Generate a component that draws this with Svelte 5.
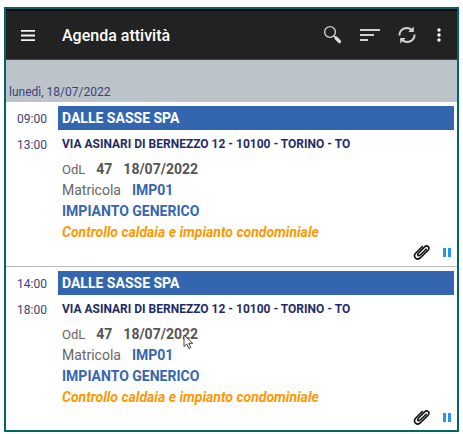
<script lang="ts">
  type Activity = {
    start: string;
    end: string;
    customer: string;
    address: string;
    order: string;
    date: string;
    serial: string;
    plant: string;
    note: string;
  };

  const day = 'lunedì, 18/07/2022';

  const base = {
    customer: 'DALLE SASSE SPA',
    address: 'VIA ASINARI DI BERNEZZO 12 - 10100 - TORINO - TO',
    order: '47',
    date: '18/07/2022',
    serial: 'IMP01',
    plant: 'IMPIANTO GENERICO',
    note: 'Controllo caldaia e impianto condominiale',
  };

  const activities: Activity[] = [
    { start: '09:00', end: '13:00', ...base },
    { start: '14:00', end: '18:00', ...base },
  ];
</script>

<div class="page">
  <main class="app">
    <header class="toolbar">
      <button class="menu" aria-label="Menu">
        <svg width="14" height="11" viewBox="0 0 14 11" fill="#f4f4f4">
          <path d="M0 0h14v1.800H0zM0 4.600h14v1.800H0zM0 9.200h14v1.800H0z" />
        </svg>
      </button>
      <h1>Agenda attività</h1>
      <button aria-label="Cerca">
        <svg width="20" height="20" viewBox="0 0 20 20" fill="none">
          <circle cx="7" cy="7" r="5.4" stroke="#d2d2d2" stroke-width="1.4" />
          <path d="M10.800 10.800l2 2" stroke="#d2d2d2" stroke-width="1.400" />
          <path d="M13 13l3.500 3.500" stroke="#e0e0e0" stroke-width="3.200" stroke-linecap="round" />
        </svg>
      </button>
      <button aria-label="Ordina">
        <svg width="20" height="20" viewBox="0 0 20 20" fill="#d0d0d0">
          <path d="M0 4h20v2H0zM0 9h14v2H0zM0 14h8v2H0z" />
        </svg>
      </button>
      <button aria-label="Aggiorna">
        <svg width="20" height="20" viewBox="0 0 20 20" fill="none" stroke="#d2d2d2" stroke-width="2">
          <path d="M2.400 10.500C2.200 6 6 3 9.800 3c2 0 3.600.7 4.800 2" />
          <path d="M17.600 9.500C17.800 14 14 17 10.200 17c-2 0-3.600-.7-4.800-2" />
          <path d="M16.800 1.500v5.500h-5.500zM3.200 18.500v-5.500h5.500z" fill="#d2d2d2" stroke="none" />
        </svg>
      </button>
      <button class="more" aria-label="Altre opzioni">
        <svg width="4" height="14" viewBox="0 0 4 14" fill="#fff">
          <circle cx="2" cy="2" r="1.7" />
          <circle cx="2" cy="7" r="1.7" />
          <circle cx="2" cy="12" r="1.7" />
        </svg>
      </button>
    </header>

    <h2 class="day">{day}</h2>

    {#each activities as item}
      <article class="activity">
        <div class="times">
          <time>{item.start}</time>
          <time>{item.end}</time>
        </div>
        <div class="details">
          <h3>{item.customer}</h3>
          <p class="address">{item.address}</p>
          <p class="row">
            <span class="small">OdL</span>
            <b>{item.order}</b>
            <b>{item.date}</b>
          </p>
          <p class="row">
            <span>Matricola</span>
            <b class="blue">{item.serial}</b>
          </p>
          <p class="row"><b class="blue">{item.plant}</b></p>
          <p class="row note">{item.note}</p>
          <div class="actions">
            <button aria-label="Allegati">
              <svg width="18" height="18" viewBox="0 0 18 18" fill="none" stroke="#111" stroke-width="1.6" stroke-linecap="round">
                <path d="M13.200 6.200L7.300 12c-1.700 1.600-3.500-.2-2-1.800l6.300-6.300c2.600-2.400 5.800.5 3.500 3.200l-7.600 7.600c-3.500 3.300-8-.8-4.900-4.500L9.300 3.500" />
              </svg>
            </button>
            <button aria-label="Pausa">
              <svg width="8" height="9" viewBox="0 0 8 9" fill="#2196f3">
                <path d="M0 0h3v9H0zM5 0h3v9H5z" />
              </svg>
            </button>
          </div>
        </div>
      </article>
    {/each}
  </main>

  <svg class="pointer" width="11" height="16" viewBox="0 0 11 16">
    <path d="M1 1v11.500l2.800-2.500 2 4.500 2-.9-2-4.300h3.900z" fill="#fff" stroke="#3c3c48" stroke-width="1" />
  </svg>
</div>

<style>
  :global(body) {
    margin: 0;
    background: #fff;
  }
  .page {
    position: relative;
    padding: 7px 4px 2px;
    font-family: Roboto, sans-serif;
    font-size: 14px;
    color: #666;
  }
  .app {
    border: 2px solid #006666;
    background: #fff;
  }
  h1,
  h2,
  h3,
  p {
    margin: 0;
  }
  button {
    display: flex;
    padding: 0;
    border: 0;
    background: none;
    cursor: pointer;
  }
  .toolbar {
    display: flex;
    align-items: center;
    gap: 17px;
    height: 48px;
    padding: 0 16px 0 15px;
    border-top: 2px solid #050505;
    border-bottom: 1px solid #4a4a4c;
    background: #222;
  }
  .menu {
    margin-right: 10px;
  }
  .more {
    margin-left: 3px;
  }
  h1 {
    flex: 1;
    font-size: 16px;
    font-weight: 500;
    color: #fff;
  }
  .day {
    padding: 22px 3px 0;
    background: #bcc4ca;
    font-size: 12px;
    font-weight: 400;
    line-height: 20px;
    color: #3a4278;
  }
  .activity {
    display: flex;
    padding: 4px 3px 5px 0;
  }
  .activity + .activity {
    border-top: 1px solid #bbb;
  }
  .activity:last-child {
    padding-bottom: 4px;
  }
  .times {
    display: flex;
    flex-direction: column;
    flex: none;
    width: 52px;
    font-size: 12px;
    line-height: 26px;
    text-align: center;
    color: #3a4278;
  }
  .details {
    flex: 1;
    min-width: 0;
  }
  h3 {
    padding: 0 4px;
    background: #3466b0;
    font-size: 14px;
    font-weight: 700;
    line-height: 24px;
    color: #fff;
  }
  .address {
    padding-left: 4px;
    font-size: 12px;
    font-weight: 700;
    line-height: 29px;
    color: #1f2b66;
  }
  .row {
    display: flex;
    gap: 11px;
    padding-left: 4px;
    line-height: 21px;
  }
  .row b {
    color: #555;
  }
  .row .blue {
    color: #3466b0;
  }
  .small {
    font-size: 13px;
  }
  .note {
    font-style: italic;
    font-weight: 700;
    color: #ff9800;
  }
  .actions {
    display: flex;
    align-items: center;
    justify-content: flex-end;
    gap: 12px;
    height: 18px;
    padding-right: 3px;
  }
  .pointer {
    position: absolute;
    top: 334px;
    left: 183px;
  }
</style>
